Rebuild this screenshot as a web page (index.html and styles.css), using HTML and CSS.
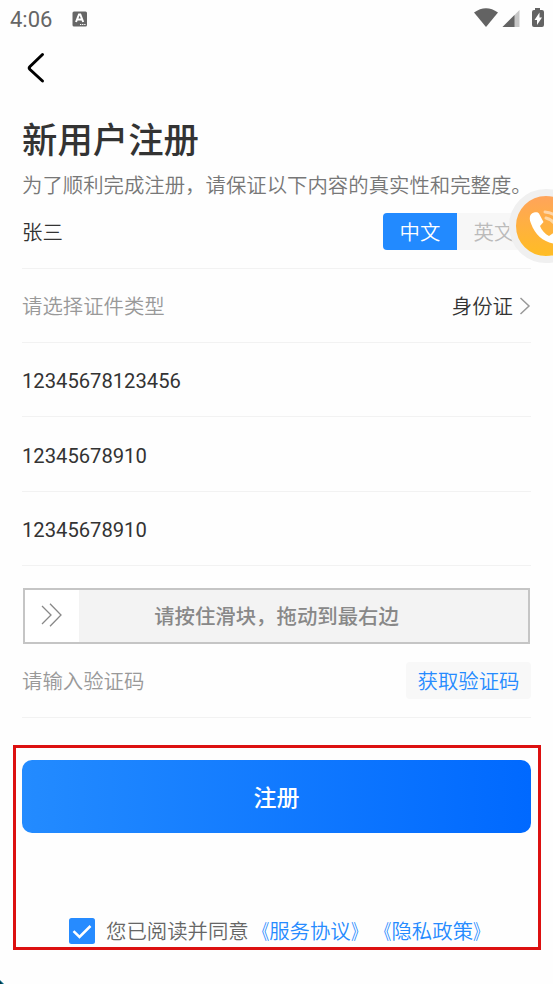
FILE: index.html
```html
<!DOCTYPE html>
<html lang="zh-CN">
<head>
<meta charset="utf-8">
<title>新用户注册</title>
<link rel="stylesheet" href="styles.css">
</head>
<body>
<div class="screen">
  <header class="status">
    <span class="time">4:06</span>
    <svg class="app-badge" width="16" height="16" viewBox="0 0 16 16"><rect x=".5" y=".5" width="14.5" height="15" rx="1.5" fill="#666"/><path d="M4 11 7 3.500h1.300l2.900 7.500M5.200 8.600h4.800" fill="none" stroke="#fff" stroke-width="2"/><path d="M8 13.500h5.500" stroke="#fff" stroke-width="1.200" stroke-dasharray="1.300 .8"/></svg>
    <svg class="signals" width="72" height="22" viewBox="0 0 72 22"><path d="M2 4.500Q14-4 26 4.500L14 19Z" fill="#636363"/><path d="M47.500 2v17H30.500Z" fill="#c6c6c6"/><path d="M42.500 7v12h-12Z" fill="#636363"/><path d="M63 0h5v2h2q2 0 2 2v13q0 2-2 2h-8q-2 0-2-2V4q0-2 2-2h1Z" fill="#636363"/><path d="M67.500 4.500 62.500 12H65v5l5-7.500h-2.500Z" fill="#fff"/></svg>
  </header>
  <nav class="nav">
    <svg width="20" height="32" viewBox="0 0 20 32"><path d="M16.500 2.500 4 14.500q-1.500 1.500 0 3L16.500 29" fill="none" stroke="#000" stroke-width="3" stroke-linecap="round" stroke-linejoin="round"/></svg>
  </nav>
  <main class="content">
    <h1 class="title">新用户注册</h1>
    <p class="subtitle">为了顺利完成注册，请保证以下内容的真实性和完整度。</p>
    <div class="row"><span>张三</span>
      <div class="lang"><span class="lang-item active">中文</span><span class="lang-item">英文</span></div>
    </div>
    <div class="row"><span class="hint">请选择证件类型</span>
      <span class="select">身份证<svg width="12" height="20" viewBox="0 0 12 20"><path d="m1.500 1 8.500 8-8.500 8" fill="none" stroke="#999" stroke-width="1.500"/></svg></span>
    </div>
    <div class="row"><span class="number">12345678123456</span></div>
    <div class="row"><span class="number">12345678910</span></div>
    <div class="row"><span class="number">12345678910</span></div>
    <div class="slider">
      <div class="handle"><svg width="22" height="24" viewBox="0 0 22 24"><path d="m1 3 9 9-9 9M9 .8 20 12 9 23.200" fill="none" stroke="#888" stroke-width="1.300"/></svg></div>
      <span class="slider-text">请按住滑块，拖动到最右边</span>
    </div>
    <div class="row code"><span class="hint">请输入验证码</span><span class="get-code">获取验证码</span></div>
  </main>
  <section class="actions">
    <div class="submit">注册</div>
    <div class="agree">
      <svg class="check" width="26" height="26" viewBox="0 0 26 26"><rect width="26" height="26" rx="2.500" fill="#268bff"/><path d="m4.500 13.200 6 5.800L21.500 8" fill="none" stroke="#fff" stroke-width="2.500"/></svg>
      <span class="agree-text">您已阅读并同意<span class="link"><span class="mark open">《</span>服务协议<span class="mark close">》</span></span><span class="link"><span class="mark open">《</span>隐私政策<span class="mark close">》</span></span></span>
    </div>
  </section>
  <div class="call"><svg width="60" height="60" viewBox="0 0 60 60"><path d="M18 16.500c-4 1-5.500 5-3 11 4 11 12 18 22 20 5 1 8-1 10-4.500l-8-7-6 4c-4-2-7.500-6-9-10l3.500-4-4.500-8.500c-1-1.500-3-1.500-5-1Z" fill="#fff"/><path d="M30 22q9 2 11 12M29 16q14 1 18 16" fill="none" stroke="#fff" stroke-opacity=".5" stroke-width="3" stroke-linecap="round"/></svg></div>
  <svg class="corner" width="4" height="4" viewBox="0 0 4 4"><path d="M0 0 4 4H0Z" fill="#086d8b"/><path d="M0 1v3h2Z" fill="#043142"/></svg>
</div>
</body>
</html>
```
FILE: styles.css
```css
* { box-sizing: border-box; }
body {
  margin: 0;
  background: #fefefe;
  color: #333;
  font: 350 20.4px/30px Roboto, "Noto Sans CJK SC", sans-serif;
}
svg { display: block; flex: none; }
.screen {
  position: relative;
  width: 553px;
  height: 984px;
  overflow: hidden;
}
.status {
  display: flex;
  align-items: center;
  height: 38px;
  padding: 0 9px;
  color: #666;
}
.time { width: 63px; padding: 1px 0 0 1px; font-size: 22px; font-weight: 400; }
.signals { margin-left: auto; }
.nav { height: 60px; padding: 14px 26px; }
.content { padding: 0 22px; }
.title {
  margin: 0;
  padding-top: 18px;
  height: 74px;
  font-size: 35.400px;
  line-height: 50px;
  font-weight: 500;
}
.subtitle {
  margin: 0;
  height: 22.500px;
  line-height: 28px;
  color: #777;
  white-space: nowrap;
}
.row {
  display: flex;
  align-items: center;
  justify-content: space-between;
  height: 74.300px;
  padding-top: 3px;
  border-bottom: 1px solid #f2f2f2;
}
.number { font-size: 20.200px; font-weight: 400; }
.hint { color: #999; }
.lang { display: flex; height: 37px; margin-top: -3px; }
.lang-item {
  width: 74px;
  padding-top: 2px;
  line-height: 37px;
  text-align: center;
  color: #bbb;
  background: #f7f7f7;
}
.lang-item.active {
  color: #fff;
  background: #228aff;
  border-radius: 4px 0 0 4px;
}
.select { display: flex; align-items: center; gap: 6px; }
.slider {
  display: flex;
  align-items: center;
  height: 56px;
  margin: 22px 1px 0;
  border: 2px solid #c5c5c5;
  background: #f3f3f3;
}
.handle {
  display: flex;
  align-items: center;
  height: 52px;
  width: 54px;
  padding: 0 0 2px 16px;
  background: #fff;
}
.slider-text {
  flex: 1;
  padding: 2px 54px 0 0;
  text-align: center;
  color: #888;
  font-weight: 500;
}
.get-code {
  width: 125px;
  height: 37px;
  margin-top: -3px;
  padding-top: 2px;
  line-height: 37px;
  text-align: center;
  color: #268bff;
  background: #f8f8f8;
  border-radius: 4px;
}
.actions {
  height: 205px;
  margin: 27px 12px 0 13px;
  padding: 12px 7px 0 6px;
  border: 3px solid #dc1010;
}
.submit {
  height: 73px;
  padding-top: 1px;
  border-radius: 10px;
  background: linear-gradient(90deg, #238bff, #0069ff);
  color: #fff;
  text-align: center;
  font-size: 23px;
  line-height: 75px;
  font-weight: 500;
}
.agree {
  display: flex;
  align-items: center;
  height: 30px;
  margin-top: 83px;
  padding-left: 47px;
  color: #666;
  white-space: nowrap;
}
.agree-text { padding-top: 2px; }
.check { margin-right: 11px; }
.link { color: #268bff; }
.mark { display: inline-block; }
.open { transform: scaleX(.75); transform-origin: right; }
.close { transform: scaleX(.75); transform-origin: left; }
.call {
  position: absolute;
  left: 509px;
  top: 189px;
  width: 74px;
  height: 74px;
  border: 7px solid #f0f0f0;
  border-radius: 50%;
  background: linear-gradient(#ffa45b, #ffbd24);
}
.corner { position: absolute; left: 0; bottom: 0; }
```
